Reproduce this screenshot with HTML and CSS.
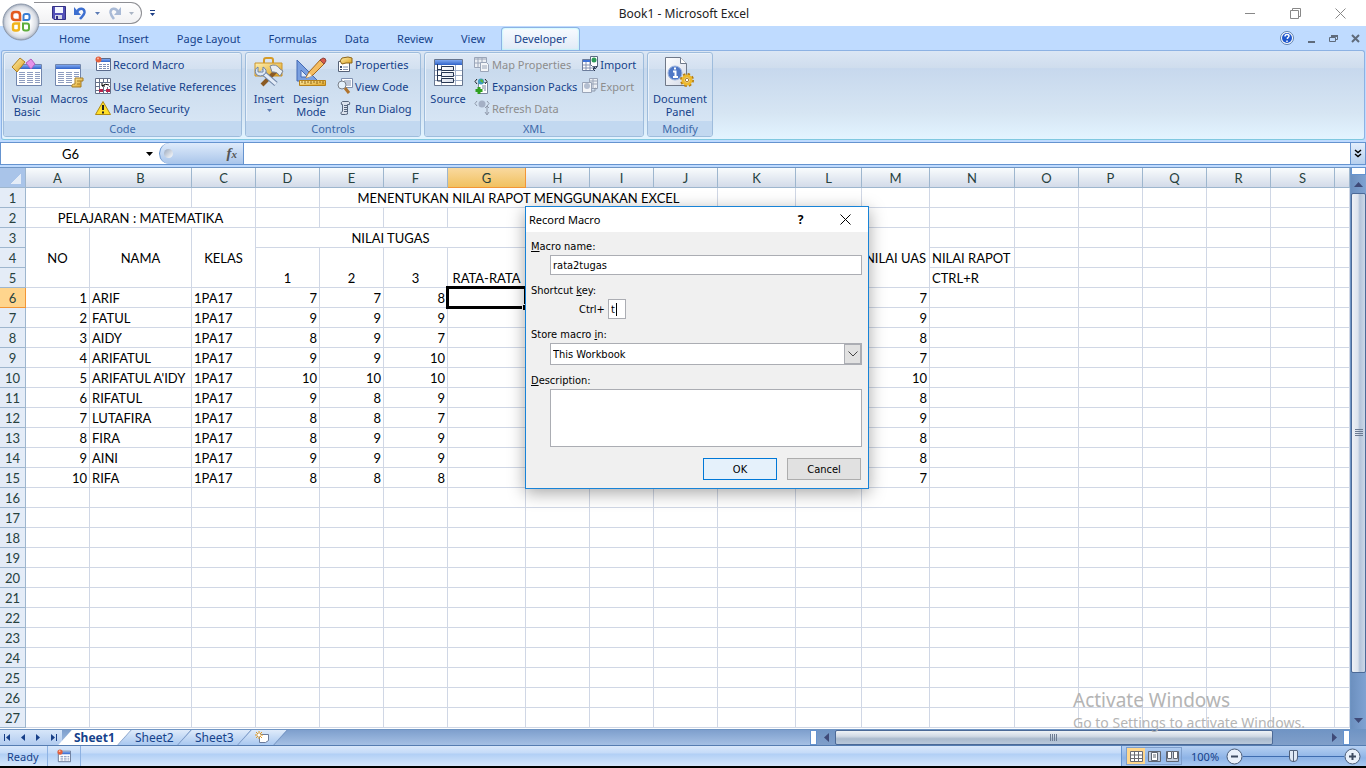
FILE: index.html
```html
<!DOCTYPE html>
<html lang="en">
<head>
  <meta charset="UTF-8" />
  <title>Book1 - Microsoft Excel</title>
  <link rel="stylesheet" href="styles.css">
</head>
<body>

<svg width="0" height="0" class="defs" aria-hidden="true">
  <defs>
    <linearGradient id="blue" x1="0" y1="0" x2="0" y2="1"><stop offset="0" stop-color="#7fa8f0"/><stop offset="1" stop-color="#2f62c8"/></linearGradient>
    <linearGradient id="paper" x1="0" y1="0" x2="1" y2="1"><stop offset="0" stop-color="#fff"/><stop offset="1" stop-color="#d5dbe8"/></linearGradient>
    <linearGradient id="gold" x1="0" y1="0" x2="1" y2="1"><stop offset="0" stop-color="#fff0b0"/><stop offset="1" stop-color="#dc9f1c"/></linearGradient>
    <radialGradient id="ball"><stop offset="0.5" stop-color="#fff"/><stop offset="0.85" stop-color="#d9dde5"/><stop offset="1" stop-color="#a3adbd"/></radialGradient>
    <symbol id="macro" viewBox="0 0 16 16">
      <path d="M1.500 2.500h14v12h-14z" fill="#fff" stroke="#5a6b8c"/><path d="M2 3h13v3h-13z" fill="url(#blue)"/>
      <path d="M4 8.500h3M8 8.500h3M12 8.500h2M4 10.500h3M8 10.500h3M12 10.500h2M4 12.500h3M8 12.500h3M12 12.500h2" stroke="#8090b8"/>
      <circle cx="3.500" cy="3.500" r="3" fill="#e2603e"/><circle cx="3" cy="2.500" r="1" fill="#ffb59d"/>
    </symbol>
  </defs>
</svg>

<div class="window">
  <header class="titlebar">
    <div class="quick">
      <button aria-label="Save"><svg width="14" height="14" viewBox="0 0 14 14"><path d="M.5.5h13v13H2L.5 12z" fill="#5350b8" stroke="#343184"/><path d="M3 1h8v6H3z" fill="#f4f6ff"/><path d="M3 9h7v4H3z" fill="#d6d8e8"/><path d="M4 10h2v3H4z" fill="#343184"/></svg></button>
      <button aria-label="Undo"><svg width="13" height="14" viewBox="0 0 13 14"><path d="M3 6C5 1 11 2 10.500 6.500c-.5 3-2.500 4-4.500 6.500" fill="none" stroke="#3d6fd0" stroke-width="2.500"/><path d="M0 1v8h7z" fill="#3d6fd0"/></svg></button>
      <svg class="drop" width="5" height="3"><path d="M0 0h5L2.500 3z" fill="#5c7bb4"/></svg>
      <button aria-label="Redo"><svg width="13" height="14" viewBox="0 0 13 14"><path d="M10 6C8 1 2 2 2.500 6.500c.5 3 1.500 4 3.500 6.500" fill="none" stroke="#a9bad6" stroke-width="2.500"/><path d="M13 1v8H6z" fill="#a9bad6"/></svg></button>
      <svg class="drop" width="5" height="3"><path d="M0 0h5L2.500 3z" fill="#a9b4c4"/></svg>
    </div>
    <button class="customize" aria-label="Customize"><svg width="5" height="6"><path d="M0 0h5v1H0zM0 3h5L2.500 6z" fill="#1e3f86"/></svg></button>
    <h1>Book1 - Microsoft Excel</h1>
    <div class="caption">
      <button aria-label="Minimize"><svg width="11" height="11"><path d="M0 5.500h10" stroke="#888"/></svg></button>
      <button aria-label="Restore"><svg width="11" height="11" fill="none" stroke="#888"><path d="M.5 2.500h8v8h-8zM2.500 2V.5h8v8H9"/></svg></button>
      <button aria-label="Close"><svg width="11" height="11"><path d="M.5.5l10 10M10.500.5l-10 10" stroke="#888"/></svg></button>
    </div>
  </header>
  <button class="office" aria-label="Office Button">
    <svg width="38" height="38" viewBox="0 0 38 38">
      <circle cx="19" cy="19" r="18" fill="url(#ball)" stroke="#8d98aa"/>
      <g fill="none" stroke-width="2.600">
        <path d="M18 17h-5q-3 0-3-3v-2q0-3 3-3h2q3 0 3 3z" stroke="#e35a1e"/>
        <path d="M21.500 17h4q2 0 2-2v-2q0-2-2-2h-2q-2 0-2 2z" stroke="#3a7fd4" stroke-width="2"/>
        <path d="M17 20.500h-4q-2 0-2 2v3q0 2 2 2h2q2 0 2-2z" stroke="#f0b41c" stroke-width="2.400"/>
        <path d="M21 20.500h4q2 0 2 2v3q0 2-2 2h-2q-2 0-2-2z" stroke="#5fae3c" stroke-width="2"/>
      </g>
    </svg>
  </button>

  <nav class="tabs">
    <a href="#">Home</a>
    <a href="#">Insert</a>
    <a href="#">Page Layout</a>
    <a href="#">Formulas</a>
    <a href="#">Data</a>
    <a href="#">Review</a>
    <a href="#">View</a>
    <a href="#" class="active">Developer</a>
    <div class="book-controls">
      <button aria-label="Help"><svg width="14" height="14"><circle cx="7" cy="7" r="6.500" fill="#fff" stroke="#5c7fae"/><circle cx="7" cy="7" r="5" fill="#1f57cc"/><path d="M5 5.500q0-2 2-2t2 1.500q0 1-1.500 2v1M7 9.500v1.500" stroke="#fff" stroke-width="1.500" fill="none"/></svg></button>
      <button aria-label="Minimize workbook"><svg width="9" height="9"><path d="M1 7h7v2H1z" fill="#5f6b7b"/></svg></button>
      <button aria-label="Restore workbook"><svg width="9" height="9"><path d="M2.500 3V1.500h6v4H7M.5 3.500h6v4h-6z" fill="none" stroke="#5f6b7b"/><path d="M2 1h7v2H2z" fill="#5f6b7b"/></svg></button>
      <button aria-label="Close workbook"><svg width="9" height="9"><path d="M1 1l7 7M8 1L1 8" stroke="#5f6b7b" stroke-width="2"/></svg></button>
    </div>
  </nav>

  <section class="ribbon">
    <div class="group code">
      <div class="tools">
        <button class="big">
          <svg width="32" height="32" viewBox="0 0 32 32"><path d="M5.500 8.500h25v21h-25z" fill="#fff" stroke="#7186ad"/><path d="M6 9h24v4H6z" fill="url(#blue)"/><path d="M8 16.500h6M16 16.500h6M24 16.500h5M8 18.500h6M16 18.500h6M24 18.500h5M8 20.500h6M16 20.500h6M24 20.500h5M8 22.500h6M16 22.500h6M24 22.500h5M8 24.500h6M16 24.500h6M24 24.500h5M8 26.500h6M16 26.500h6M24 26.500h5" stroke="#8e9dc0"/><path d="M1 11L9 2l5 4-8 10z" fill="url(#gold)" stroke="#b08020"/><path d="M15 7l5-4 4 5-4 5z" fill="#e793e8" stroke="#b25fc0"/></svg>
          <span>Visual<br>Basic</span>
        </button>
        <button class="big">
          <svg width="32" height="32" viewBox="0 0 32 32"><path d="M2.500 8.500h25v21h-25z" fill="#fff" stroke="#7186ad"/><path d="M3 9h24v4H3z" fill="url(#blue)"/><path d="M5 16.500h6M13 16.500h6M21 16.500h5M5 18.500h6M13 18.500h6M21 18.500h5M5 20.500h6M13 20.500h6M21 20.500h5M5 22.500h6M13 22.500h6M5 24.500h6M13 24.500h6M5 26.500h6M13 26.500h6" stroke="#8e9dc0"/><path d="M22 22h8v3h-2v6h-9q-1-3 3-3z" fill="url(#gold)" stroke="#a67c24"/><path d="M24 25h4M24 28h3" stroke="#a67c24"/></svg>
          <span>Macros</span>
        </button>
        <div class="stack">
          <button><svg width="16" height="16"><use href="#macro"/></svg>Record Macro</button>
          <button><svg width="16" height="16"><path d="M.5.5h15v15H.5z" fill="#fff" stroke="#65718a"/><path d="M0 4.500h16M0 8.500h16M0 12.500h16M4.500 0v16M8.500 0v16M12.500 0v16" stroke="#65718a"/><path d="M5 5h9v4H5z" fill="#fff"/><path d="M7 8q3-3 7-1M7 5v3h3" stroke="#000" fill="none"/><path d="M4 11h4v3H4zM11 11h4v3h-4z" fill="#b8244c"/></svg>Use Relative References</button>
          <button><svg width="16" height="16"><path d="M8 1.500L15.500 14.500H.5z" fill="#ffdf28" stroke="#b08a14" stroke-linejoin="round"/><path d="M8 5v5M8 11.500v2" stroke="#222" stroke-width="2"/></svg>Macro Security</button>
        </div>
      </div>
      <h2>Code</h2>
    </div>

    <div class="group controls">
      <div class="tools">
        <button class="big">
          <svg width="32" height="32" viewBox="0 0 32 32"><path d="M11 7V4q0-2 2-2h5q2 0 2 2v3" fill="none" stroke="#d59b28" stroke-width="2"/><path d="M2 7h27v13H2z" fill="url(#gold)" stroke="#cc942a"/><path d="M23 15L9 29" stroke="#8a5a24" stroke-width="4"/><path d="M17 10q6-3 10 3l3 2-3 5q-3-5-8-4z" fill="#e8edf3" stroke="#7c8798"/><path d="M8 15l15 13" stroke="#6d83a5" stroke-width="5"/><path d="M8 15l15 13" stroke="#e2ebf7" stroke-width="3"/><path d="M5 11v5h5v-5q5 3 2 7-5 4-9 0-2-5 2-7z" fill="#dce7f5" stroke="#6d83a5"/></svg>
          <span>Insert</span>
          <svg class="drop" width="5" height="3"><path d="M0 0h5L2.500 3z" fill="#5c7bb4"/></svg>
        </button>
        <button class="big">
          <svg width="32" height="32" viewBox="0 0 32 32"><path d="M2 4v21h21z" fill="#7aa0e0" stroke="#4369b4"/><path d="M6 14v7h7z" fill="#dce9fb" stroke="#4369b4"/><path d="M11 22l3-6L26 3l4 4-12 12z" fill="#f5bd60" stroke="#a6671b"/><path d="M25 4l3-2q3 0 3 3l-2 3z" fill="#d95a4a" stroke="#8c4740"/><path d="M14 17l3 3-6 2z" fill="#fff1d0"/><path d="M4.500 24.500h26v5h-26z" fill="url(#gold)" stroke="#b78119"/><path d="M7 25v2M10 25v3M13 25v2M16 25v3M19 25v2M22 25v3M25 25v2M28 25v3" stroke="#916413"/></svg>
          <span>Design<br>Mode</span>
        </button>
        <div class="stack">
          <button><svg width="16" height="16"><path d="M1.500 5.500h11v10h-11z" fill="#fff" stroke="#566278"/><path d="M3 10h2v2H3zM3 13h2v1H3z" fill="#384c70"/><path d="M6 11h5M6 13.500h5" stroke="#8292b0"/><path d="M5 2l6-1 4 1v5H9L5 8 3 5z" fill="url(#gold)" stroke="#8b6418"/></svg>Properties</button>
          <button><svg width="16" height="16"><path d="M4.500.5h11v9h-11z" fill="#fff" stroke="#7f90b0"/><path d="M7 3h7M7 5h7M9 7h5" stroke="#7f90b0"/><circle cx="5" cy="7" r="4" fill="#e5f1fc" stroke="#7a808a"/><path d="M8 10l4 5" stroke="#b0732c" stroke-width="3"/></svg>View Code</button>
          <button><svg width="16" height="16"><path d="M5.500 1.500h6q2 1 1 3h-2v8q1 2-2 2h-4q-2-2 1-3v-7h-1q-1-2 1-3z" fill="#dbe2ec" stroke="#56657c"/><path d="M7 5.500h3M7 7.500h3M7 9.500h3M7 11.500h3" stroke="#56657c"/></svg>Run Dialog</button>
        </div>
      </div>
      <h2>Controls</h2>
    </div>

    <div class="group xml">
      <div class="tools">
        <button class="big">
          <svg width="32" height="32" viewBox="0 0 32 32"><path d="M2.500 3.500h28v26h-28z" fill="#fff" stroke="#66758f"/><path d="M3 4h27v5H3z" fill="url(#blue)"/><path d="M3 14.500h27M3 19.500h27M3 24.500h27M9.500 9v20M23.500 9v20" stroke="#a1afc8"/><path d="M5.500 8v17h5M5.500 13.500h4M5.500 19.500h4" stroke="#283753" fill="none"/><path d="M9.500 10.500h12v4h-12zM9.500 16.500h12v4h-12zM9.500 22.500h12v4h-12z" fill="url(#paper)" stroke="#283753"/></svg>
          <span>Source</span>
        </button>
        <div class="stack">
          <button disabled><svg width="16" height="16"><path d="M.5 1.500h12v10H.5z" fill="#eceff4" stroke="#9aa5b8"/><path d="M0 3h13M0 7h12M4 2v9M8 2v9" stroke="#9aa5b8"/><path d="M6.500 6.500h6l2 2v7h-8z" fill="#f3f5f8" stroke="#9aa5b8"/><path d="M8 10h5M8 12h5" stroke="#9aa5b8"/></svg>Map Properties</button>
          <button><svg width="16" height="16"><path d="M4.500 4.500h9v11h-9z" fill="#fff" stroke="#78869d"/><path d="M8 8h4M8 10h4M10 12h2" stroke="#78869d"/><circle cx="7" cy="3.500" r="3" fill="#3f9cc0"/><path d="M7 1q3 1 2 4L6 3z" fill="#58b43c"/><path d="M3 1L1 3.500 3 6M11 1l2 2.500L11 6" stroke="#222" fill="none"/><path d="M5 9v7M1.500 12.500h7" stroke="#30a020" stroke-width="3"/></svg>Expansion Packs</button>
          <button disabled><svg width="16" height="16"><path d="M3 1L1 3.500 3 6M13 1l2 2.500L13 6" stroke="#8f99aa" fill="none"/><circle cx="8" cy="4" r="3.500" fill="#a4b0c5"/><path d="M13 6v8M11 8l2-2 2 2M11 12l2 3 2-3" stroke="#8f99aa" fill="none"/></svg>Refresh Data</button>
        </div>
        <div class="stack">
          <button><svg width="16" height="16"><path d="M.5 3.500h11v11H.5z" fill="#fff" stroke="#6c7d9c"/><path d="M1 4h10v2H1z" fill="#3f73d8"/><path d="M1 9h10M1 12h10M4 6v8M8 6v8" stroke="#8391b0"/><path d="M8.500.5h7v10h-5l-2-2z" fill="#fff" stroke="#5c6a82"/><circle cx="12" cy="4" r="2.500" fill="#2e9c58"/><path d="M15 10q0 3-4 3M13 11l-2 2 2 2" stroke="#26344c" fill="none"/></svg>Import</button>
          <button disabled><svg width="16" height="16"><path d="M7.500.5h8v10h-8z" fill="#eceff4" stroke="#9aa5b8"/><path d="M8 3h7M8 6h7M11 1v9" stroke="#9aa5b8"/><path d="M.5 4.500h9v10h-9z" fill="#f3f5f8" stroke="#9aa5b8"/><circle cx="5" cy="8" r="3" fill="#b4bfd1"/><path d="M10 13h3V10M12 11l1-1 2 1" stroke="#8f99aa" fill="none"/></svg>Export</button>
        </div>
      </div>
      <h2>XML</h2>
    </div>

    <div class="group modify">
      <div class="tools">
        <button class="big">
          <svg width="32" height="32" viewBox="0 0 32 32"><path d="M1.500 1.500h15l6 6v22h-21z" fill="url(#paper)" stroke="#6f7888"/><path d="M16.500 1.500v6h6" fill="#fff" stroke="#6f7888"/><circle cx="11" cy="17" r="7" fill="#4f78c6" stroke="#9db5e0"/><path d="M9 15.500h2.500V21M9 21h5M10 12.500h2" stroke="#fff" stroke-width="2" fill="none"/><circle cx="23" cy="24" r="5.500" fill="none" stroke="#b57c10" stroke-width="3" stroke-dasharray="2.300 2"/><circle cx="23" cy="24" r="4" fill="#fff" stroke="#edb92c" stroke-width="3"/><circle cx="23" cy="24" r="1.800" fill="#fff" stroke="#a87410"/></svg>
          <span>Document<br>Panel</span>
        </button>
      </div>
      <h2>Modify</h2>
    </div>
  </section>

  <div class="formula-bar">
    <div class="name-box">
      <input type="text" value="G6" aria-label="Name Box">
      <button aria-label="Cell names"><svg width="7" height="4"><path d="M0 0h7L3.500 4z"/></svg></button>
    </div>
    <div class="fx"><span class="knob"></span><button aria-label="Insert Function"><i>f<small>x</small></i></button></div>
    <input class="formula" type="text" aria-label="Formula">
    <button class="expand" aria-label="Expand Formula Bar"><svg width="8" height="9" fill="none" stroke="#000" stroke-width="1.500"><path d="M1 1l3 2.500L7 1M1 5l3 2.500L7 5"/></svg></button>
  </div>

  <main class="workspace">
    <div class="sheet"><table id="grid"></table></div>
    <div class="vscroll">
      <span class="split"></span>
      <button aria-label="Scroll up"><svg width="9" height="5"><path d="M0 5h9L4.500 0z" fill="#3f4a78"/></svg></button>
      <div class="thumb"><span class="grip"></span></div>
      <button aria-label="Scroll down"><svg width="9" height="5"><path d="M0 0h9L4.500 5z" fill="#3f4a78"/></svg></button>
    </div>
    <div class="watermark"><p>Activate Windows</p><p>Go to Settings to activate Windows.</p></div>
  </main>

  <div class="sheetbar">
    <div class="sheet-nav">
      <button aria-label="First sheet"><svg width="7" height="7"><path d="M0 0h1v7H0zM6 0v7L2 3.500z" fill="#173f88"/></svg></button>
      <button aria-label="Previous sheet"><svg width="7" height="7"><path d="M5 0v7L1 3.500z" fill="#173f88"/></svg></button>
      <button aria-label="Next sheet"><svg width="7" height="7"><path d="M1 0v7l4-3.500z" fill="#173f88"/></svg></button>
      <button aria-label="Last sheet"><svg width="7" height="7"><path d="M0 0v7l4-3.500zM5 0h1v7H5z" fill="#173f88"/></svg></button>
    </div>
    <div class="sheet-tabs">
      <a href="#" class="active"><span>Sheet1</span></a>
      <a href="#"><span>Sheet2</span></a>
      <a href="#"><span>Sheet3</span></a>
      <a href="#" class="new" aria-label="Insert Worksheet"><svg width="15" height="13"><path d="M4.500 3.500h9v6l-3 2h-6z" fill="#fff" stroke="#6b7c9c"/><path d="M4 0v8M0 4h8M1 1l6 6M7 1L1 7" stroke="#e29a22"/><circle cx="4" cy="4" r="1.500" fill="#fff"/></svg></a>
    </div>
    <div class="hscroll">
      <span class="split"></span>
      <button aria-label="Scroll left"><svg width="5" height="9"><path d="M5 0v9L0 4.500z" fill="#3f4a78"/></svg></button>
      <div class="thumb"><span class="grip"></span></div>
      <button class="right" aria-label="Scroll right"><svg width="5" height="9"><path d="M0 0v9l5-4.500z" fill="#3f4a78"/></svg></button>
      <span class="split"></span>
    </div>
  </div>

  <footer class="status">
    <span class="ready">Ready</span>
    <button class="rec" aria-label="Record Macro"><svg width="16" height="14" viewBox="0 0 16 16"><use href="#macro"/></svg></button>
    <div class="zoom">
      <div class="views">
        <button class="on" aria-label="Normal"><svg width="13" height="11" fill="#fff" stroke="#6b6a70"><path d="M.5.5h12v10H.5zM0 4h13M0 7.500h13M4.500 0v11M8.500 0v11"/></svg></button>
        <button aria-label="Page Layout view"><svg width="13" height="11" stroke="#5f6673"><path d="M.5.5h12v10H.5z" fill="#c3cddc"/><path d="M3.500 1.500h6v8h-6z" fill="#fff"/><path d="M5 4h3M5 6h3"/></svg></button>
        <button aria-label="Page Break Preview"><svg width="13" height="11" stroke="#5f6673"><path d="M.5.5h12v10H.5z" fill="#c3cddc"/><path d="M1.500.5h4v7h-4zM7.500.5h4v7h-4z" fill="#fff"/></svg></button>
      </div>
      <a href="#">100%</a>
      <button class="round" aria-label="Zoom out"><svg width="17" height="17"><circle cx="8.500" cy="8.500" r="7.500" fill="#e9f0fa" stroke="#4a5c78"/><path d="M5 8.500h7" stroke="#3d4a60" stroke-width="2"/></svg></button>
      <input type="range" min="0" max="100" value="50" aria-label="Zoom">
      <button class="round" aria-label="Zoom in"><svg width="17" height="17"><circle cx="8.500" cy="8.500" r="7.500" fill="#e9f0fa" stroke="#4a5c78"/><path d="M5 8.500h7M8.500 5v7" stroke="#3d4a60" stroke-width="2"/></svg></button>
    </div>
  </footer>

  <form class="dialog">
    <div class="dialog-title">
      <h2>Record Macro</h2>
      <button type="button" aria-label="Help">?</button>
      <button type="button" aria-label="Close"><svg width="11" height="11"><path d="M.5.5l10 10M10.500.5l-10 10" stroke="#000"/></svg></button>
    </div>
    <div class="dialog-body">
      <label for="macro-name"><u>M</u>acro name:</label>
      <input id="macro-name" type="text" value="rata2tugas">
      <label for="shortcut">Shortcut <u>k</u>ey:</label>
      <div class="shortcut"><span>Ctrl+</span><input id="shortcut" type="text" value="t"><i class="caret"></i></div>
      <label for="store">Store macro <u>i</u>n:</label>
      <div class="combo">
        <select id="store"><option>This Workbook</option></select>
        <span><svg width="10" height="6"><path d="M.5.5L5 5 9.500.5" fill="none" stroke="#444"/></svg></span>
      </div>
      <label for="desc"><u>D</u>escription:</label>
      <textarea id="desc"></textarea>
      <div class="actions">
        <button type="submit" class="ok">OK</button>
        <button type="button">Cancel</button>
      </div>
    </div>
  </form>
</div>

<script src="script.js"></script>
</body>
</html>
```
FILE: styles.css
```css
* {
  box-sizing: border-box;
}
body {
  margin: 0;
  height: 100vh;
  overflow: hidden;
  background: #000;
  font-family: "Noto Sans", sans-serif;
  font-size: 11px;
  color: #15428b;
}
h1, h2, p {
  margin: 0;
  font-weight: normal;
}
button {
  padding: 0;
  border: 0;
  background: none;
  font: inherit;
  color: inherit;
}
input, select, textarea {
  font: inherit;
  color: #000;
  border: 0;
  border-radius: 0;
  outline: 0;
  margin: 0;
}
a {
  color: inherit;
  text-decoration: none;
}
svg {
  display: block;
  flex: none;
}
.defs {
  position: absolute;
}

.window {
  height: calc(100vh - 2px);
  display: flex;
  flex-direction: column;
  background: #bfdbff;
}

/* title bar */
.titlebar {
  height: 26px;
  flex: none;
  display: flex;
  align-items: center;
  padding-left: 34px;
  background: #fff;
}
.quick {
  display: flex;
  align-items: center;
  gap: 8px;
  height: 22px;
  width: 108px;
  padding-left: 18px;
  border: 1px solid #8e8f94;
  border-left: 0;
  border-radius: 0 11px 11px 0;
  background: linear-gradient(#fff, #f1f1f3);
}
.customize {
  margin-left: 8px;
}
.titlebar h1 {
  flex: 1;
  text-align: center;
  font-size: 12px;
  color: #222;
  padding-right: 32px;
}
.caption {
  display: flex;
  gap: 34px;
  padding-right: 20px;
}
.office {
  position: absolute;
  left: 2px;
  top: 3px;
}

/* tabs */
.tabs {
  height: 24px;
  flex: none;
  display: flex;
  align-items: flex-end;
  gap: 4px;
  padding-left: 47px;
}
.tabs a {
  height: 23px;
  line-height: 24px;
  padding: 0 12px;
}
.tabs .active {
  border: 1px solid #8db2e3;
  border-bottom: 0;
  border-radius: 4px 4px 0 0;
  background: linear-gradient(#f8fbff, #e0eaf6);
  box-shadow: inset 0 0 2px #8ff;
  line-height: 22px;
}
.book-controls {
  margin-left: auto;
  align-self: center;
  display: flex;
  align-items: center;
  gap: 13px;
  padding-right: 6px;
}

/* ribbon */
.ribbon {
  flex: none;
  height: 90px;
  margin: 0 1px;
  padding: 1px 1px 2px;
  display: flex;
  gap: 3px;
  border: 1px solid #8db2e3;
  border-bottom-color: #7fc8e0;
  border-radius: 3px;
  background: linear-gradient(#dbe6f4, #cfdded 19%, #c7d8ed 20%, #d6e5f3 70%, #e3f4ff);
}
.group {
  display: flex;
  flex-direction: column;
  border: 1px solid #9ebcdc;
  border-radius: 3px;
  overflow: hidden;
  background: linear-gradient(#dfe9f5, #d3e0f0 19%, #c9daed 20%, #dae8f6);
  box-shadow: inset 1px 1px 0 #e9f1fa;
}
.code { width: 239px; }
.controls { width: 176px; }
.xml { width: 220px; }
.modify { width: 66px; }
.group h2 {
  height: 15px;
  line-height: 15px;
  text-align: center;
  font-size: 11px;
  color: #3e6aaa;
  background: #c2d8f0;
}
.tools {
  flex: 1;
  display: flex;
  padding-left: 2px;
}
.big {
  display: flex;
  flex-direction: column;
  align-items: center;
  width: 42px;
  padding-top: 3px;
  line-height: 13px;
}
.big span {
  padding-top: 4px;
}
.modify .tools {
  justify-content: center;
  padding-left: 0;
}
.modify .big {
  width: 64px;
}
.big .drop {
  margin-top: 4px;
}
.stack {
  display: flex;
  flex-direction: column;
  padding-left: 5px;
}
.stack button {
  height: 22px;
  display: flex;
  align-items: center;
  gap: 2px;
  white-space: nowrap;
}
.stack button:disabled {
  color: #8d8d8d;
}

/* formula bar */
.formula-bar {
  flex: none;
  height: 23px;
  margin: 2px 0;
  display: flex;
  border: 1px solid #6593cf;
  border-width: 1px 0 1px 1px;
  background: #fff;
  font-family: Lato, sans-serif;
  font-size: 13px;
}
.name-box {
  width: 158px;
  display: flex;
  align-items: center;
}
.name-box input {
  flex: 1;
  min-width: 0;
  text-align: center;
}
.name-box button {
  padding: 0 6px;
}
.fx {
  width: 85px;
  display: flex;
  align-items: center;
  justify-content: space-between;
  padding: 0 6px 0 4px;
  border: 1px solid #6593cf;
  border-width: 0 1px 0 1px;
  border-radius: 11px 0 0 11px;
  background: linear-gradient(#dfebfb, #a9c5ea);
}
.knob {
  width: 9px;
  height: 9px;
  border-radius: 50%;
  background: linear-gradient(135deg, #9aa8bd, #fff);
}
.fx i {
  font-family: "Liberation Serif", serif;
  font-size: 15px;
  font-weight: bold;
  color: #555;
}
.fx small {
  font-size: 11px;
}
.formula {
  flex: 1;
}
.expand {
  width: 16px;
  display: flex;
  align-items: center;
  justify-content: center;
  border: 1px solid #6593cf;
  border-width: 0 1px;
  background: linear-gradient(#e3eefc, #b6cfee);
}

/* sheet */
.workspace {
  flex: 1;
  min-height: 0;
  display: flex;
  position: relative;
}
.sheet {
  flex: 1;
  min-width: 0;
  overflow: hidden;
  background: #fff;
  border-top: 1px solid #6f95c4;
}
#grid {
  width: 100%;
  table-layout: fixed;
  border-spacing: 0;
  font-family: Lato, sans-serif;
  font-size: 13px;
  line-height: 17px;
  color: #000;
}
#grid td, #grid th {
  height: 20px;
  padding: 2px 2px 0;
  border: solid #d0d7e5;
  border-width: 0 1px 1px 0;
  font-weight: normal;
  text-align: left;
  vertical-align: bottom;
  white-space: nowrap;
}
#grid th {
  padding: 2px 0 0;
  text-align: center;
  color: #27413e;
  border-color: #9eb6ce;
  background: #e4ecf7;
}
#grid thead th {
  background: linear-gradient(#f9fcfd, #d3dbe9);
}
#grid thead th.corner {
  position: relative;
  background: #a9c4e9;
}
.corner::after {
  content: "";
  position: absolute;
  right: 4px;
  bottom: 3px;
  width: 11px;
  height: 11px;
  background: linear-gradient(135deg, transparent 50%, #e4ecf7 50%);
}
#grid thead th.on {
  background: linear-gradient(#f9d99f, #f1c15f);
  border-color: #f29536;
}
#grid tbody th.on {
  background: #ffd58d;
  border-color: #f29536;
}
#grid .num { text-align: right; }
#grid .mid { text-align: center; }
#grid .center { text-align: center; vertical-align: middle; }
#grid .selected {
  position: relative;
}
.selected::before {
  content: "";
  position: absolute;
  inset: -2px;
  border: 3px solid #000;
}
.selected::after {
  content: "";
  position: absolute;
  right: -3px;
  bottom: -3px;
  width: 5px;
  height: 5px;
  background: #000;
  border: solid #fff;
  border-width: 1px 0 0 1px;
}
.watermark {
  position: absolute;
  right: 57px;
  bottom: -4px;
  width: 236px;
  color: #b4b4b4;
  font-size: 14px;
  line-height: 20px;
  white-space: nowrap;
}
.watermark p:first-child {
  font-size: 19px;
  line-height: 26px;
}

/* scroll bars */
.split {
  background: #fff;
  border: 1px solid #6593cf;
}
.vscroll {
  width: 16px;
  display: flex;
  flex-direction: column;
  border-left: 1px solid #6f95c4;
  background: linear-gradient(90deg, #6c90bf, #7fa2d2);
}
.vscroll .split {
  height: 8px;
}
.vscroll button {
  height: 18px;
  display: flex;
  align-items: center;
  justify-content: center;
}
.thumb {
  flex: 1;
  display: flex;
  align-items: center;
  justify-content: center;
  border: 1px solid #4c6a97;
  border-radius: 2px;
}
.vscroll .thumb {
  margin-bottom: 38px;
  background: linear-gradient(90deg, #eef1f6, #dce3ec 45%, #b4c4da 60%, #ccd8e8);
}
.vscroll .grip {
  width: 8px;
  height: 8px;
  background: repeating-linear-gradient(#6c7b92 0 1px, transparent 1px 2px);
}

/* sheet tabs */
.sheetbar {
  flex: none;
  height: 17px;
  display: flex;
  background: linear-gradient(#7e9fcd, #a5c0e4);
  border-top: 1px solid #6f95c4;
  border-bottom: 1px solid #567db1;
}
.sheet-nav {
  width: 62px;
  display: flex;
  align-items: center;
  justify-content: space-around;
  background: linear-gradient(#d7e6f9, #b1cbef);
}
.sheet-tabs {
  display: flex;
  padding-left: 3px;
}
.sheet-tabs a {
  width: 60px;
  display: flex;
  align-items: center;
  justify-content: center;
  font-size: 12px;
  background: linear-gradient(#dfebfa, #a9c8f0);
  border: 1px solid #7695c3;
  border-width: 0 1px 0 0;
  transform: skewX(-42deg);
}
.sheet-tabs span, .sheet-tabs svg {
  transform: skewX(42deg);
}
.sheet-tabs .active {
  font-weight: bold;
  background: #fff;
}
.sheet-tabs .new {
  width: 36px;
}
.hscroll {
  width: 556px;
  margin-left: auto;
  display: flex;
  padding-right: 16px;
  background: linear-gradient(#7094c4, #809fca);
}
.hscroll .split {
  width: 7px;
}
.hscroll button {
  width: 18px;
  display: flex;
  align-items: center;
  justify-content: center;
}
.hscroll .thumb {
  margin-right: 52px;
  background: linear-gradient(#eef2f6, #d1dae5 40%, #aabacd 60%, #bac9db);
}
.hscroll .grip {
  width: 8px;
  height: 7px;
  background: repeating-linear-gradient(90deg, #6c7b92 0 1px, transparent 1px 2px);
}

/* status bar */
.status {
  flex: none;
  height: 20px;
  display: flex;
  align-items: center;
  background: linear-gradient(#d9e8fb, #c5dbf8 35%, #b1cff5 40%, #d6e7fb);
}
.ready {
  width: 47px;
  padding-left: 7px;
}
.rec {
  height: 20px;
  padding: 0 8px;
  border: 1px solid #8db2e3;
  border-width: 0 1px;
}
.zoom {
  width: 245px;
  height: 20px;
  margin-left: auto;
  display: flex;
  align-items: center;
  padding: 0 5px 0 4px;
  border-left: 1px solid #6593cf;
  background: linear-gradient(#b6d0f2, #8db3e6 60%, #a9c9f1);
}
.views {
  display: flex;
  border: 1px solid #7f9fcc;
  margin-right: 9px;
}
.views button {
  width: 18px;
  height: 16px;
  display: flex;
  align-items: center;
  justify-content: center;
}
.views .on {
  background: #ffd78c;
}
.zoom a {
  width: 35px;
}
.zoom input {
  appearance: none;
  flex: 1;
  min-width: 0;
  height: 14px;
  background: linear-gradient(#3f6db0, #3f6db0) center / 100% 1px no-repeat;
}
.zoom input::-webkit-slider-thumb {
  appearance: none;
  width: 9px;
  height: 12px;
  background: linear-gradient(90deg, #dfe8f5 3px, #52617a 3px 4px, #dfe8f5 4px);
  border: 1px solid #52617a;
  border-radius: 1px 1px 4px 4px;
}

/* record macro dialog */
.dialog {
  position: absolute;
  left: 525px;
  top: 206px;
  width: 344px;
  border: 1px solid #1883d7;
  background: #f0f0f0;
  color: #000;
  box-shadow: 0 4px 16px rgba(0, 0, 0, 0.35);
}
.dialog-title {
  height: 25px;
  display: flex;
  align-items: center;
  padding-left: 3px;
  background: #fff;
}
.dialog-title h2 {
  flex: 1;
  font-size: 11px;
  line-height: 14px;
}
.dialog-title button {
  width: 45px;
  display: flex;
  justify-content: center;
  font-size: 12px;
  font-weight: bold;
}
.dialog-body {
  display: flex;
  flex-direction: column;
  padding: 7px 6px 8px 5px;
  font-family: "DejaVu Sans Condensed", "DejaVu Sans", sans-serif;
}
.dialog-body label {
  height: 16px;
  line-height: 16px;
}
.dialog-body input, .dialog-body textarea, .combo {
  margin-left: 19px;
  border: 1px solid #abadb3;
  background: #fff;
}
.dialog-body input {
  height: 20px;
  padding: 0 2px;
  margin-bottom: 8px;
}
.shortcut {
  display: flex;
  align-items: center;
  padding-left: 48px;
  margin-bottom: 8px;
  position: relative;
}
.dialog-body .shortcut input {
  width: 18px;
  margin: 0 0 0 3px;
}
.caret {
  position: absolute;
  left: 85px;
  top: 4px;
  width: 1px;
  height: 13px;
  background: #000;
}
.combo {
  display: flex;
  height: 22px;
  margin-bottom: 8px;
  position: relative;
}
.combo select {
  appearance: none;
  flex: 1;
  padding: 0 2px;
  background: #fff;
}
.combo span {
  position: absolute;
  right: 0;
  top: 0;
  bottom: 0;
  width: 17px;
  display: flex;
  align-items: center;
  justify-content: center;
  border: 1px solid #abadb3;
  background: #e1e1e1;
  pointer-events: none;
}
.dialog-body textarea {
  height: 58px;
  resize: none;
}
.actions {
  display: flex;
  justify-content: flex-end;
  gap: 10px;
  padding: 11px 1px 0 0;
}
.actions button {
  width: 74px;
  height: 22px;
  border: 1px solid #adadad;
  background: #e1e1e1;
}
.actions .ok {
  border-color: #0078d7;
  background: #e5f1fb;
}
```
FILE: script.js
```js
const widths = [26, 64, 102, 64, 64, 64, 64, 78, 64, 64, 64, 78, 66, 68, 85, 64, 64, 64, 64, 64];
const letters = 'ABCDEFGHIJKLMNOPQRST';

// ref: [text, class, colspan, rowspan]
const cells = {
  E1: ['MENENTUKAN NILAI RAPOT MENGGUNAKAN EXCEL', 'mid', 6, 1],
  A2: ['PELAJARAN : MATEMATIKA', 'mid', 3, 1],
  A3: ['NO', 'center', 1, 3],
  B3: ['NAMA', 'center', 1, 3],
  C3: ['KELAS', 'center', 1, 3],
  D3: ['NILAI TUGAS', 'mid', 4, 1],
  D4: ['1', 'mid', 1, 2],
  E4: ['2', 'mid', 1, 2],
  F4: ['3', 'mid', 1, 2],
  G4: ['RATA-RATA', 'mid', 1, 2],
  M3: ['NILAI UAS', 'center', 1, 3],
  N4: ['NILAI RAPOT'],
  N5: ['CTRL+R'],
  G6: ['', 'selected']
};

const students = [
  ['ARIF', 7, 7, 8, 7],
  ['FATUL', 9, 9, 9, 9],
  ['AIDY', 8, 9, 7, 8],
  ['ARIFATUL', 9, 9, 10, 7],
  ["ARIFATUL A'IDY", 10, 10, 10, 10],
  ['RIFATUL', 9, 8, 9, 8],
  ['LUTAFIRA', 8, 8, 7, 9],
  ['FIRA', 8, 9, 9, 8],
  ['AINI', 9, 9, 9, 8],
  ['RIFA', 8, 8, 8, 7]
];
students.forEach((s, i) => {
  const r = i + 6;
  cells['A' + r] = [i + 1, 'num'];
  cells['B' + r] = [s[0]];
  cells['C' + r] = ['1PA17'];
  cells['D' + r] = [s[1], 'num'];
  cells['E' + r] = [s[2], 'num'];
  cells['F' + r] = [s[3], 'num'];
  cells['M' + r] = [s[4], 'num'];
});

const covered = new Set();
let html = '<colgroup>' + widths.map(w => `<col style="width:${w}px">`).join('') + '<col></colgroup>';
html += '<thead><tr><th class="corner"></th>';
for (const l of letters) {
  html += `<th class="${l === 'G' ? 'on' : ''}">${l === 'T' ? '' : l}</th>`;
}
html += '</tr></thead><tbody>';
for (let r = 1; r <= 27; r++) {
  html += `<tr><th class="${r === 6 ? 'on' : ''}">${r}</th>`;
  for (let c = 0; c < letters.length; c++) {
    const ref = letters[c] + r;
    if (covered.has(ref)) continue;
    const [text = '', cls = '', cs = 1, rs = 1] = cells[ref] || [];
    for (let y = 0; y < rs; y++) {
      for (let x = 0; x < cs; x++) covered.add(letters[c + x] + (r + y));
    }
    html += `<td class="${cls}" colspan="${cs}" rowspan="${rs}">${text}</td>`;
  }
  html += '</tr>';
}
document.getElementById('grid').innerHTML = html + '</tbody>';
```
